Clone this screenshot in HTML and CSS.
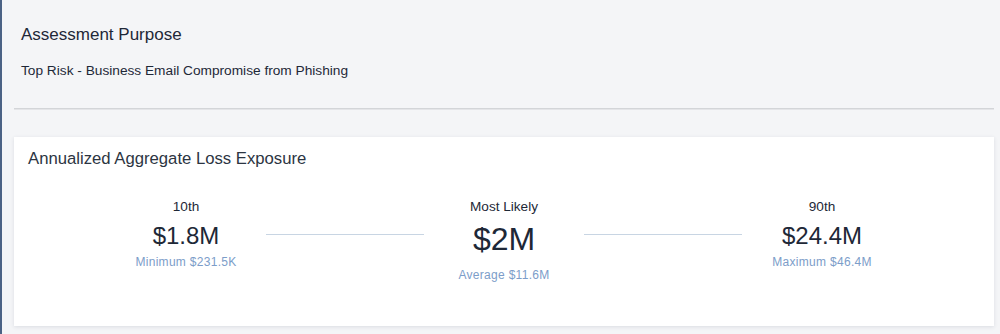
FILE: index.html
```html
<!DOCTYPE html>
<html lang="en">
<head>
  <meta charset="UTF-8" />
  <meta name="viewport" content="width=device-width, initial-scale=1.0" />
  <title>Assessment</title>
  <link rel="stylesheet" href="styles.css">
</head>
<body>
  <div class="page">
    <div class="purpose">
      <h2>Assessment Purpose</h2>
      <p>Top Risk - Business Email Compromise from Phishing</p>
    </div>
    <hr class="divider" />

    <div class="card">
      <h3>Annualized Aggregate Loss Exposure</h3>
      <div class="stats">
        <div class="stat">
          <div class="label">10th</div>
          <div class="value">$1.8M</div>
          <div class="sub">Minimum $231.5K</div>
        </div>
        <div class="line"></div>
        <div class="stat main">
          <div class="label">Most Likely</div>
          <div class="value">$2M</div>
          <div class="sub">Average $11.6M</div>
        </div>
        <div class="line"></div>
        <div class="stat">
          <div class="label">90th</div>
          <div class="value">$24.4M</div>
          <div class="sub">Maximum $46.4M</div>
        </div>
      </div>
    </div>
  </div>
</body>
</html>
```

FILE: styles.css
```css
body {
  font-family: "Liberation Sans", Arial, sans-serif;
  background: #f4f5f7;
  margin: 0;
  padding: 0;
  border-left: 2px solid #4b6285;
  min-height: 334px;
  box-sizing: border-box;
  color: #1e2837;
}
.page {
  padding: 0 6px 0 12px;
}
.purpose {
  padding: 25px 7px 0;
}
.purpose h2 {
  font-size: 17px;
  font-weight: normal;
  line-height: 20px;
  margin: 0 0 18px;
}
.purpose p {
  font-size: 13.7px;
  line-height: 16px;
  margin: 0;
}
.divider {
  border: none;
  border-top: 1px solid #d3d5d8;
  border-bottom: 1px solid #e4e5e8;
  margin: 29px 0 27px;
  height: 0;
}
.card {
  background: #fff;
  box-shadow: 0 1px 4px rgba(40, 50, 80, 0.12);
  padding: 12px 14px 44px;
}
.card h3 {
  font-size: 16.7px;
  font-weight: normal;
  line-height: 20px;
  color: #2c3542;
  margin: 0 0 30px;
}
.stats {
  display: flex;
  justify-content: center;
  align-items: flex-start;
}
.stat {
  width: 160px;
  text-align: center;
}
.label {
  font-size: 13.6px;
  line-height: 16px;
}
.value {
  font-size: 24px;
  line-height: 28px;
  margin-top: 7px;
}
.main .value {
  font-size: 32px;
  line-height: 38px;
  margin-top: 5px;
}
.sub {
  font-size: 12px;
  line-height: 14px;
  letter-spacing: 0.3px;
  color: #7c9dc9;
  margin-top: 5px;
}
.main .sub {
  margin-top: 10px;
}
.line {
  width: 158px;
  height: 1px;
  background: #c8d5e3;
  margin-top: 35px;
}
```
